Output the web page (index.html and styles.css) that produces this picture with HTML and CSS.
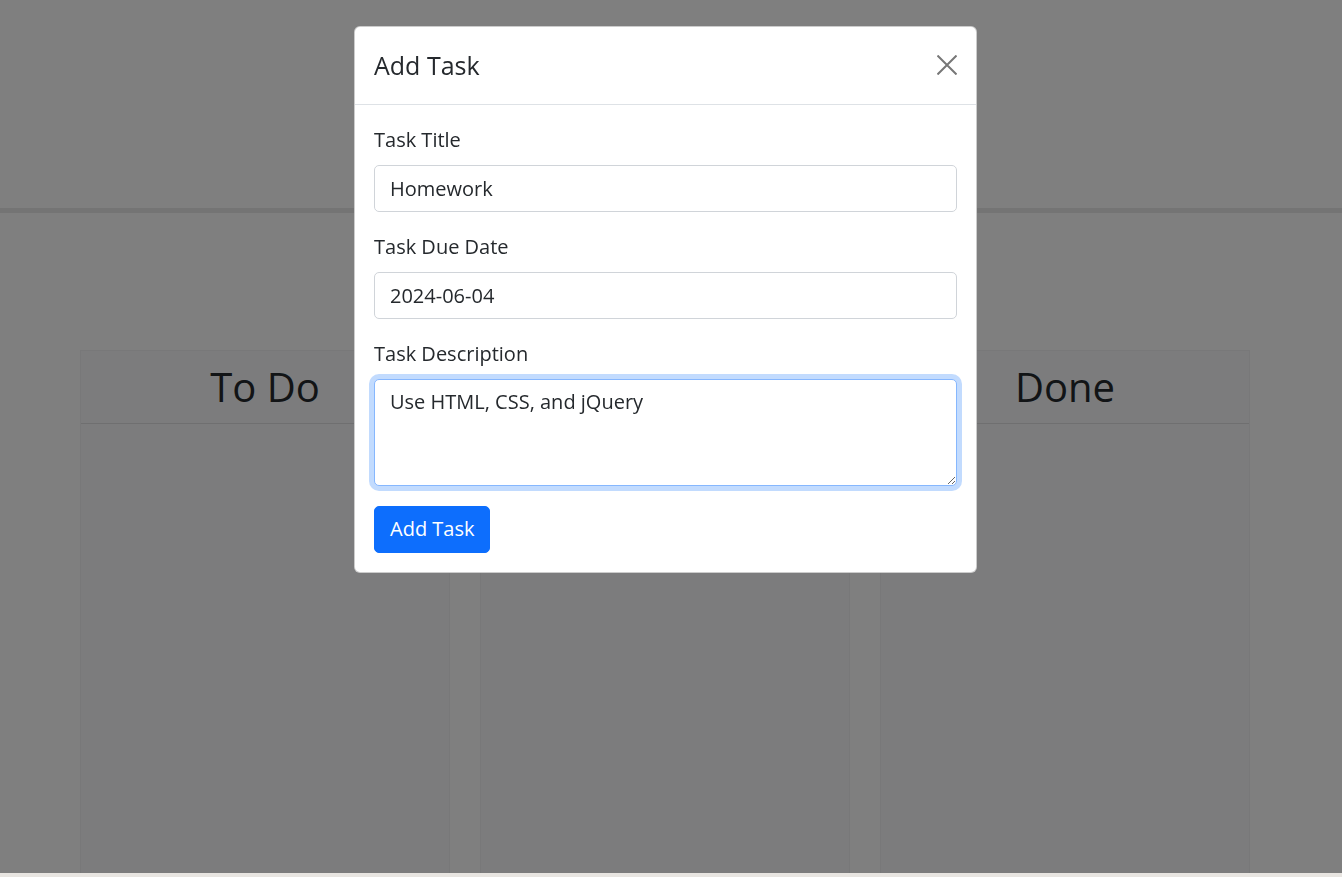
FILE: index.html
```html
<!DOCTYPE html>
<html lang="en">
<head>
<meta charset="utf-8">
<title>Task Board</title>
<link rel="stylesheet" href="styles.css">
</head>
<body>
<header class="hero">
  <h1 class="hero-title">Task Board</h1>
  <p class="hero-sub">A simple Kanban board</p>
</header>

<main class="board">
  <section class="lane">
    <div class="lane-head"><h2>To Do</h2></div>
    <div class="lane-body"></div>
  </section>
  <section class="lane">
    <div class="lane-head"><h2>In Progress</h2></div>
    <div class="lane-body"></div>
  </section>
  <section class="lane">
    <div class="lane-head"><h2>Done</h2></div>
    <div class="lane-body"></div>
  </section>
</main>

<div class="backdrop"></div>
<div class="bottom-strip"></div>

<div class="modal-wrap">
  <div class="modal">
    <div class="modal-header">
      <h5 class="modal-title">Add Task</h5>
      <button class="btn-close" type="button" aria-label="Close">
        <svg width="20" height="20" viewBox="0 0 20 20"><path d="M0.5 0.5L19.5 19.5M19.5 0.5L0.5 19.5" stroke="#777777" stroke-width="2" fill="none"/></svg>
      </button>
    </div>
    <form class="modal-body">
      <div class="field">
        <label class="form-label">Task Title</label>
        <input class="form-control" type="text" value="Homework">
      </div>
      <div class="field">
        <label class="form-label">Task Due Date</label>
        <input class="form-control" type="text" value="2024-06-04">
      </div>
      <div class="field">
        <label class="form-label">Task Description</label>
        <textarea class="form-control textarea focused" rows="3">Use HTML, CSS, and jQuery</textarea>
      </div>
      <button class="btn-primary" type="button">Add Task</button>
    </form>
  </div>
</div>
</body>
</html>
```

FILE: styles.css
```css
* { box-sizing: border-box; }

html, body {
  margin: 0;
  padding: 0;
}

body {
  font-family: "Open Sans", "Noto Sans", sans-serif;
  font-size: 20px;
  line-height: 1.5;
  color: #25292d;
  background: #ffffff;
  height: 877px;
  overflow: hidden;
}

.hero {
  height: 213px;
  background: #ffffff;
  border-bottom: 5px solid #e9e9e9;
  display: flex;
  flex-direction: column;
  align-items: center;
  justify-content: center;
}

.hero-title {
  margin: 0;
  font-size: 40px;
  font-weight: 400;
  line-height: 1.2;
}

.hero-sub {
  margin: 0;
  font-size: 18px;
}

.board {
  display: flex;
  gap: 30px;
  padding: 137px 0 0 80px;
}

.lane {
  width: 370px;
  height: 527px;
  background: #f8f9fa;
  border: 1px solid rgba(0, 0, 0, 0.03);
  border-bottom: 0;
  display: flex;
  flex-direction: column;
}

.lane-head {
  border-bottom: 1px solid rgba(0, 0, 0, 0.1);
  padding: 12px 20px;
  text-align: center;
}

.lane-head h2 {
  margin: 0;
  font-size: 40px;
  font-weight: 400;
  line-height: 48px;
}

.lane-body {
  flex: 1;
}

.backdrop {
  position: fixed;
  inset: 0;
  background: rgba(0, 0, 0, 0.5);
}

.bottom-strip {
  position: fixed;
  left: 0;
  right: 0;
  bottom: 0;
  height: 4px;
  background: #e8e5e1;
}

.modal-wrap {
  position: fixed;
  inset: 0 11px 0 0;
  display: flex;
  justify-content: center;
  align-items: flex-start;
  padding-top: 26px;
}

.modal {
  width: 623px;
  background: #ffffff;
  border: 1px solid rgba(0, 0, 0, 0.2);
  border-radius: 6px;
  overflow: hidden;
}

.modal-header {
  display: flex;
  align-items: center;
  justify-content: space-between;
  padding: 19.5px 19px;
  border-bottom: 1px solid #dee2e6;
}

.modal-title {
  margin: 0;
  font-size: 25px;
  font-weight: 400;
  line-height: 37.5px;
}

.btn-close {
  width: 30px;
  height: 30px;
  padding: 5px;
  margin-right: -5px;
  border: 0;
  background: transparent;
  display: flex;
  align-items: center;
  justify-content: center;
  cursor: pointer;
}

.modal-body {
  padding: 20px 19px 19px 19px;
  display: flex;
  flex-direction: column;
  align-items: flex-start;
}

.field {
  width: 100%;
  margin-bottom: 20px;
}

.form-label {
  display: block;
  margin-bottom: 10px;
  font-size: 20px;
  line-height: 30px;
}

.form-control {
  display: block;
  width: 100%;
  height: 47px;
  padding: 7.5px 15px;
  font-family: inherit;
  font-size: 20px;
  line-height: 30px;
  color: #25292d;
  background: #ffffff;
  border: 1px solid #d0d4d9;
  border-radius: 5px;
  outline: none;
}

.textarea {
  height: 107px;
  resize: vertical;
}

.focused {
  border-color: #86b7fe;
  box-shadow: 0 0 0 5px rgba(13, 110, 253, 0.25);
}

.btn-primary {
  font-family: inherit;
  font-size: 20px;
  line-height: 30px;
  padding: 7.5px 15px;
  color: #ffffff;
  background: #0d6efd;
  border: 1px solid #0d6efd;
  border-radius: 5px;
  cursor: pointer;
}
```
